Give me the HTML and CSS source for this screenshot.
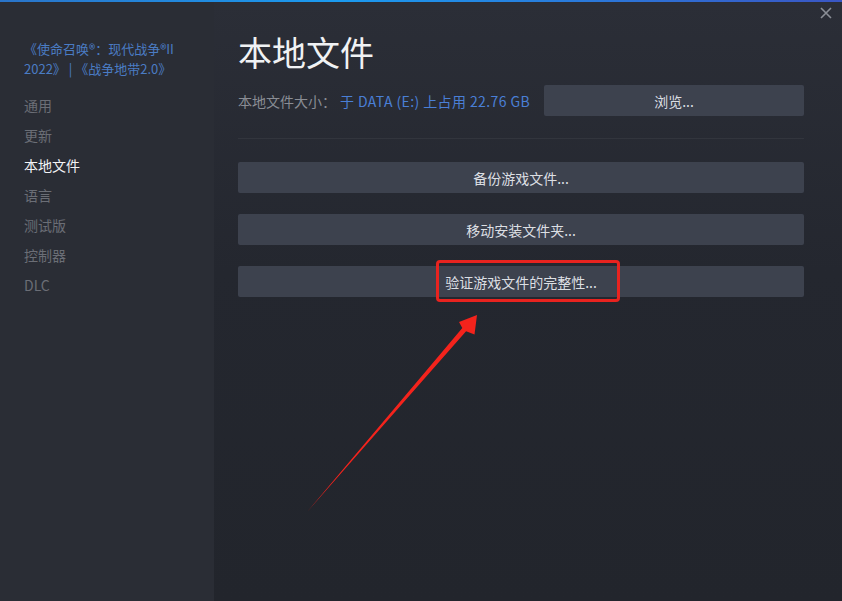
FILE: index.html
```html
<!DOCTYPE html>
<html lang="zh-CN">
<head>
<meta charset="utf-8">
<title>本地文件</title>
<link rel="stylesheet" href="styles.css">
</head>
<body>
<div class="window">
  <div class="topbar"></div>
  <div class="body">
    <aside class="sidebar">
      <div class="game-title">《使命召唤®：现代战争®II 2022》 | 《战争地带2.0》</div>
      <nav class="nav">
        <div class="nav-item">通用</div>
        <div class="nav-item">更新</div>
        <div class="nav-item active">本地文件</div>
        <div class="nav-item">语言</div>
        <div class="nav-item">测试版</div>
        <div class="nav-item">控制器</div>
        <div class="nav-item">DLC</div>
      </nav>
    </aside>
    <main class="main">
      <h1 class="title">本地文件</h1>
      <div class="size-row">
        <span class="size-label">本地文件大小：</span>
        <span class="size-value">于 DATA (E:) 上占用 22.76 GB</span>
        <button class="btn browse">浏览...</button>
      </div>
      <div class="sep"></div>
      <div class="actions">
        <button class="btn wide">备份游戏文件...</button>
        <button class="btn wide">移动安装文件夹...</button>
        <button class="btn wide">验证游戏文件的完整性...</button>
      </div>
    </main>
  </div>
  <div class="close">
    <svg width="12" height="12" viewBox="0 0 12 12"><path d="M1 1L11 11M11 1L1 11" stroke="#8b8f97" stroke-width="1.6" fill="none"/></svg>
  </div>
  <div class="highlight"></div>
  <svg class="arrow" width="842" height="601" viewBox="0 0 842 601">
    <polygon points="307,512 466.1,331.2 474.5,334.5 477,315 459,322 462.3,328" fill="#f4231c"/>
  </svg>
</div>
</body>
</html>
```
FILE: styles.css
```css
* { box-sizing: border-box; }
html, body { margin: 0; padding: 0; }
body {
  width: 842px;
  height: 601px;
  overflow: hidden;
  background: #24272f;
  font-family: "Noto Sans CJK SC", "Noto Sans", "Liberation Sans", sans-serif;
}
.window {
  position: relative;
  width: 842px;
  height: 601px;
  display: flex;
  flex-direction: column;
}
.topbar {
  height: 2px;
  flex: none;
  background: linear-gradient(90deg, #2a74c9 0%, #1b9bf0 40%, #3a56c4 100%);
}
.body {
  flex: 1;
  display: flex;
}
.sidebar {
  width: 214px;
  flex: none;
  background: #2a2d35;
  padding: 37px 20px 0 24px;
}
.game-title {
  color: #4a7cc4;
  font-size: 13px;
  line-height: 20px;
}
.nav {
  margin-top: 11px;
  display: flex;
  flex-direction: column;
}
.nav-item {
  height: 30px;
  line-height: 30px;
  font-size: 14px;
  color: #6b6e76;
}
.nav-item.active {
  color: #f2f3f5;
}
.main {
  flex: 1;
  background: linear-gradient(180deg, #2b2e37 0%, #24272f 45%, #22252c 100%);
  padding: 30px 38px 0 24px;
}
.title {
  margin: 0;
  font-size: 34px;
  line-height: 40px;
  font-weight: 400;
  color: #f0f2f4;
}
.size-row {
  margin-top: 13px;
  height: 31px;
  display: flex;
  align-items: center;
  font-size: 14px;
}
.size-label { color: #8a8d94; }
.size-value { color: #4a7fd6; margin-left: 4px; letter-spacing: 0.4px; }
.btn {
  border: none;
  background: #3d424e;
  color: #dcdfe3;
  font-family: inherit;
  font-size: 14px;
  height: 31px;
  border-radius: 2px;
  padding: 0;
}
.browse {
  margin-left: auto;
  width: 260px;
}
.sep {
  margin-top: 22px;
  height: 1px;
  background: #32353d;
}
.actions {
  margin-top: 23px;
  display: flex;
  flex-direction: column;
  gap: 21px;
}
.wide { width: 100%; }
.close {
  position: absolute;
  top: 7px;
  right: 10px;
  width: 12px;
  height: 12px;
  display: flex;
}
.highlight {
  position: absolute;
  left: 436px;
  top: 260px;
  width: 184px;
  height: 42px;
  border: 3px solid #e8231f;
  border-radius: 4px;
}
.arrow {
  position: absolute;
  left: 0;
  top: 0;
  pointer-events: none;
}
```
